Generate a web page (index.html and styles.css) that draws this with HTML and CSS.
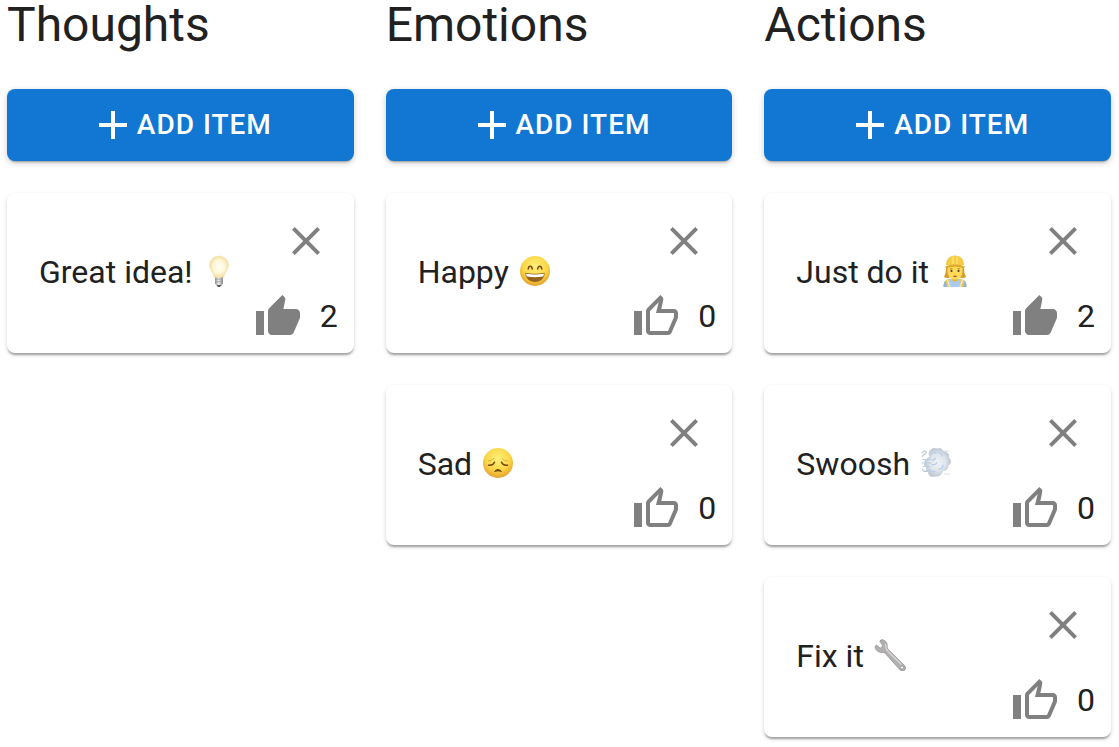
FILE: index.html
```html
<!DOCTYPE html>
<html lang="en">
<head>
<meta charset="utf-8">
<meta name="viewport" content="width=device-width, initial-scale=1">
<title>Board</title>
<link rel="stylesheet" href="styles.css">
</head>
<body>
<svg class="defs" aria-hidden="true">
  <defs>
    <radialGradient id="face" cx="50%" cy="35%" r="65%"><stop offset="0" stop-color="#fff07a"/><stop offset=".6" stop-color="#fbd747"/><stop offset="1" stop-color="#e3a02d"/></radialGradient>
    <radialGradient id="glass"><stop offset="0" stop-color="#fffef6"/><stop offset=".6" stop-color="#fff7d9"/><stop offset="1" stop-color="#f5dfa0"/></radialGradient>
    <linearGradient id="metal" x1="0" x2="1"><stop offset="0" stop-color="#8d8d92"/><stop offset=".45" stop-color="#ededee"/><stop offset="1" stop-color="#85858a"/></linearGradient>
    <radialGradient id="puff"><stop offset="0" stop-color="#f1f4f8"/><stop offset=".6" stop-color="#dfe5ec"/><stop offset="1" stop-color="#bfc7d1"/></radialGradient>
    <symbol id="add" viewBox="0 0 24 24"><path d="M19 13h-6v6h-2v-6H5v-2h6V5h2v6h6v2z"/></symbol>
    <symbol id="close" viewBox="0 0 24 24"><path d="M19 6.410L17.590 5 12 10.590 6.410 5 5 6.410 10.590 12 5 17.590 6.410 19 12 13.410 17.590 19 19 17.590 13.410 12z"/></symbol>
    <symbol id="liked" viewBox="0 0 24 24"><path d="M1 21h4V9H1v12zm22-11c0-1.100-.9-2-2-2h-6.310l.95-4.570.03-.32c0-.41-.17-.79-.44-1.060L14.170 1 7.590 7.590C7.220 7.950 7 8.450 7 9v10c0 1.100.9 2 2 2h9c.83 0 1.540-.5 1.840-1.220l3.020-7.050c.09-.23.14-.47.14-.73v-2z"/></symbol>
    <symbol id="like" viewBox="0 0 24 24"><path d="M9 21h9c.83 0 1.540-.5 1.840-1.220l3.020-7.050c.09-.23.14-.47.14-.73v-2c0-1.100-.9-2-2-2h-6.310l.95-4.570.03-.32c0-.41-.17-.79-.44-1.060L14.170 1 7.580 7.590C7.220 7.950 7 8.450 7 9v10c0 1.100.9 2 2 2zM9 9l4.340-4.340L12 10h9v2l-3 7H9V9zM1 9h4v12H1z"/></symbol>
  </defs>
</svg>
<main class="board">
  <section class="column">
    <h1 class="title">Thoughts</h1>
    <button class="add" type="button"><svg class="icon"><use href="#add"/></svg>Add item</button>
    <article class="card">
      <p class="text">Great idea!
        <svg class="emoji" viewBox="0 0 32 32" role="img" aria-label="light bulb">
          <path d="M16 1a9.400 9.400 0 0 0-9.400 9.400c0 4.500 3.600 6.300 4.800 12.100h9.200c1.200-5.800 4.800-7.600 4.800-12.100A9.400 9.400 0 0 0 16 1z" fill="url(#glass)" stroke="#f3dfac" stroke-width=".7"/>
          <path d="M12 22.500h8v6l-2 2.500h-4l-2-2.500z" fill="url(#metal)"/>
          <path d="M12 24.500l8-.7M12 27l8-.7" stroke="#9a9a9d" stroke-width=".7"/>
          <path d="M13.500 30h5L17 32h-2z" fill="#59595c"/>
        </svg>
      </p>
      <div class="actions">
        <button class="icon-button close" type="button" aria-label="Delete"><svg class="icon"><use href="#close"/></svg></button>
        <div class="likes"><button class="icon-button" type="button" aria-label="Like"><svg class="icon"><use href="#liked"/></svg></button><span class="count">2</span></div>
      </div>
    </article>
  </section>

  <section class="column">
    <h1 class="title">Emotions</h1>
    <button class="add" type="button"><svg class="icon"><use href="#add"/></svg>Add item</button>
    <article class="card">
      <p class="text">Happy
        <svg class="emoji" viewBox="0 0 32 32" role="img" aria-label="grinning face">
          <circle cx="16" cy="16" r="15" fill="url(#face)"/>
          <path d="M9.200 14c.5-3.700 3.400-3.700 4.200 0M18.600 14c.8-3.700 3.700-3.700 4.200 0" fill="none" stroke="#7b4a16" stroke-width="1.500" stroke-linecap="round"/>
          <path d="M6.300 17.800c6.500 1.200 12.900 1.200 19.400 0-.3 5.600-4 9.200-9.700 9.200s-9.400-3.600-9.700-9.200z" fill="#94631f"/>
          <path d="M7 18.700c6 1 12 1 18 0-.2 1.600-.6 2.400-1.300 2.900-5.100.8-10.300.8-15.400 0-.7-.5-1.100-1.300-1.300-2.900z" fill="#fff"/>
        </svg>
      </p>
      <div class="actions">
        <button class="icon-button close" type="button" aria-label="Delete"><svg class="icon"><use href="#close"/></svg></button>
        <div class="likes"><button class="icon-button" type="button" aria-label="Like"><svg class="icon"><use href="#like"/></svg></button><span class="count">0</span></div>
      </div>
    </article>
    <article class="card">
      <p class="text">Sad
        <svg class="emoji" viewBox="0 0 32 32" role="img" aria-label="disappointed face">
          <circle cx="16" cy="16" r="15" fill="url(#face)"/>
          <path d="M6.500 18.200c2.600.3 5-.8 6-3M25.500 18.200c-2.600.3-5-.8-6-3" fill="none" stroke="#70440f" stroke-width="1.500" stroke-linecap="round"/>
          <path d="M6.500 14c2.200-.1 4-1 5.200-2.500M25.500 14c-2.200-.1-4-1-5.200-2.500" fill="none" stroke="#d6a038" stroke-width=".8" stroke-linecap="round"/>
          <path d="M12.500 24.500c1.800-2.600 5.200-2.600 7 0-2.300-.8-4.700-.8-7 0z" fill="#70440f" stroke="#70440f" stroke-width=".8" stroke-linejoin="round"/>
        </svg>
      </p>
      <div class="actions">
        <button class="icon-button close" type="button" aria-label="Delete"><svg class="icon"><use href="#close"/></svg></button>
        <div class="likes"><button class="icon-button" type="button" aria-label="Like"><svg class="icon"><use href="#like"/></svg></button><span class="count">0</span></div>
      </div>
    </article>
  </section>

  <section class="column">
    <h1 class="title">Actions</h1>
    <button class="add" type="button"><svg class="icon"><use href="#add"/></svg>Add item</button>
    <article class="card">
      <p class="text">Just do it
        <svg class="emoji" viewBox="0 0 32 32" role="img" aria-label="construction worker">
          <path d="M7 12c0 5-.7 8-2.200 10 2.700 1.500 5.200 1.300 7.200 0h8c2 1.300 4.500 1.500 7.200 0C25.700 20 25 17 25 12z" fill="#d79b2c"/>
          <path d="M4.500 32c0-5 2-7.300 6-8.200h11c4 .9 6 3.200 6 8.200z" fill="#f6c744"/>
          <path d="M11 24h10l1 8H10z" fill="#a9cbed"/>
          <path d="M4.500 32c0-3 .7-5 2-6.400l1.500 6.400zM27.500 32c0-3-.7-5-2-6.400L24 32z" fill="#86b5e2"/>
          <path d="M13 20h6v5c-1.500 2.200-4.500 2.200-6 0z" fill="#eeb638"/>
          <path d="M8.500 10h15v6c0 5-3.300 8.500-7.500 8.500S8.500 21 8.500 16z" fill="#ffda58"/>
          <path d="M8.500 25l2.300 7M23.500 25l-2.300 7" stroke="#eee6d0" stroke-width="1.500"/>
          <path d="M11 14l2.500-.3M18.500 13.700l2.500.3" stroke="#8e631c" stroke-width=".8"/>
          <circle cx="12.500" cy="16" r="1.100" fill="#4d3a27"/><circle cx="19.500" cy="16" r="1.100" fill="#4d3a27"/>
          <path d="M13.800 21c1.500-.8 2.900-.8 4.400 0-1.200 1.200-3.200 1.200-4.400 0z" fill="#a54c30"/>
          <path d="M7 10C7 4.500 10.300.5 16 .5S25 4.500 25 10z" fill="#f5cb43"/>
          <path d="M14 1.500V9M18 1.500V9" stroke="#ffe477" stroke-width="1.200"/>
          <path d="M5.500 12c5.500-3.500 15.500-3.500 21 0-1.500 1.200-3 .8-4.500.4-4-1-8-1-12 0-1.500.4-3 .8-4.500-.4z" fill="#dfaa2c"/>
        </svg>
      </p>
      <div class="actions">
        <button class="icon-button close" type="button" aria-label="Delete"><svg class="icon"><use href="#close"/></svg></button>
        <div class="likes"><button class="icon-button" type="button" aria-label="Like"><svg class="icon"><use href="#liked"/></svg></button><span class="count">2</span></div>
      </div>
    </article>
    <article class="card">
      <p class="text">Swoosh
        <svg class="emoji" viewBox="0 0 32 32" role="img" aria-label="dashing away">
          <path d="M24 4h5M24 27h6" stroke="#dbe2ea" stroke-width="1" stroke-linecap="round"/>
          <path d="M9 7c0-4 4.500-7 8-5 3-1.500 6 .5 6.500 3 4-.3 6 2.500 5 5.500 3 2.500 3 6-.5 8 0 4-3 5.500-5.500 5-.5 4-4 6.500-7.500 5.500-3 1.500-6.500 0-6.500-3.500-2-1-2.500-3-1.500-4.500-2-1.500-3-3-2-4.500-1-1.500-.5-3 1.500-3.500.5-2 1.500-2.500 3.500-2.500z" fill="url(#puff)" stroke="#c3cbd5" stroke-width=".8"/>
          <path d="M11 8c1-3 4-3 5-1.500M19 6c2 0 3 1 3 3M10 23c1 2 3 2.500 5 1M19 22c2 0 4-1 4-4M12 13c2 .5 3-.5 3.500-2M12 17.500c2 .5 4 0 5-2" fill="none" stroke="#b3cdea" stroke-width="1.200" stroke-linecap="round"/>
          <path d="M3 12.500h8M2 16h9M3 19.500h7" stroke="#b9cde3" stroke-width="1.200" stroke-linecap="round"/>
          <path d="M2 6c1-2.500 4.500-2.500 4.200-.5C6 7 3.500 7 2.500 9.500M2.500 22c0 2.500 2.500 3 4.500 2" fill="none" stroke="#b5c1cf" stroke-width="1.100" stroke-linecap="round"/>
        </svg>
      </p>
      <div class="actions">
        <button class="icon-button close" type="button" aria-label="Delete"><svg class="icon"><use href="#close"/></svg></button>
        <div class="likes"><button class="icon-button" type="button" aria-label="Like"><svg class="icon"><use href="#like"/></svg></button><span class="count">0</span></div>
      </div>
    </article>
    <article class="card">
      <p class="text">Fix it
        <svg class="emoji" viewBox="0 0 32 32" role="img" aria-label="wrench">
          <path d="M7 .8C10.500.4 13.500 3 13.200 7.200c-.1 1.500.3 2.300 1.300 3.500l16 15.800c3 3.500-1 7.500-4.400 4.500L11.500 14.700c-1-1-1.900-1.400-3.500-1.300C3.800 13.600.8 10.500 1.200 7l1.500-.8 3.500 3L9 6.700 5.800 2.400z" fill="#b3b0b1" stroke="#8c898b" stroke-width=".7" stroke-linejoin="round"/>
          <path d="M11.500 5c.5 4 0 5 2.500 7.500l13.500 13" fill="none" stroke="#dad8d9" stroke-width="1.300"/>
          <circle cx="28" cy="28.500" r="1.500" fill="#fff" stroke="#818186" stroke-width=".6"/>
        </svg>
      </p>
      <div class="actions">
        <button class="icon-button close" type="button" aria-label="Delete"><svg class="icon"><use href="#close"/></svg></button>
        <div class="likes"><button class="icon-button" type="button" aria-label="Like"><svg class="icon"><use href="#like"/></svg></button><span class="count">0</span></div>
      </div>
    </article>
  </section>
</main>
</body>
</html>
```
FILE: styles.css
```css
* { box-sizing: border-box; }

body {
  margin: 0;
  background: #fff;
  color: #212121;
  font-family: Roboto, "Liberation Sans", sans-serif;
  font-size: 32px;
  line-height: 48px;
}

.defs { position: absolute; width: 0; height: 0; }

.board {
  display: grid;
  grid-template-columns: repeat(3, minmax(0, 1fr));
  gap: 32px;
  padding: 0 8px 8px 7px;
}

.column {
  display: flex;
  flex-direction: column;
  gap: 32px;
}

.title {
  margin: 0;
  padding-bottom: 7px;
  font-size: 48px;
  font-weight: 400;
  line-height: 50px;
}

.icon { display: block; width: 48px; height: 48px; flex: none; fill: currentColor; }

.add {
  display: flex;
  align-items: center;
  justify-content: center;
  padding: 12px 16px;
  border: 0;
  border-radius: 8px;
  background: #1276d3;
  color: #fff;
  font: 500 28px/48px Roboto, "Liberation Sans", sans-serif;
  letter-spacing: 1px;
  text-transform: uppercase;
  box-shadow: 0 3px 2px -2px rgba(0, 0, 0, .3), 0 2px 6px rgba(0, 0, 0, .2);
  cursor: pointer;
}

.card {
  display: flex;
  align-items: center;
  justify-content: space-between;
  min-height: 160px;
  padding: 0 16px 0 32px;
  border-radius: 8px;
  background: #fff;
  box-shadow: 0 3px 2px -1px rgba(0, 0, 0, .28), 0 2px 4px rgba(0, 0, 0, .16);
}

.text { margin: 0; padding-bottom: 2px; }

.emoji { width: 32px; height: 32px; margin-left: 2px; vertical-align: -4px; }

.actions {
  display: flex;
  flex-direction: column;
  align-items: flex-end;
  gap: 28px;
  padding: 24px 0 12px;
}

.likes { display: flex; align-items: center; gap: 18px; }

.count { line-height: 46px; padding-bottom: 2px; }

.icon-button {
  display: block;
  padding: 0;
  border: 0;
  background: none;
  color: #808080;
  cursor: pointer;
}

.close { margin-right: 8px; }
```
